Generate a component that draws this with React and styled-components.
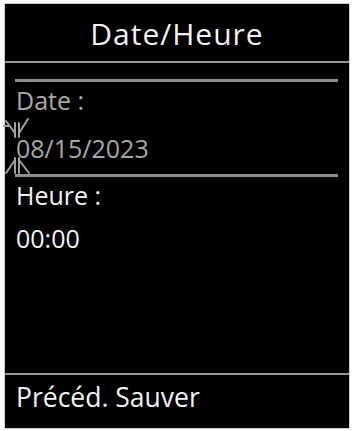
import React from "react";
import styled, { createGlobalStyle } from "styled-components";

const Global = createGlobalStyle`
  html, body { margin: 0; padding: 0; background: #ffffff; }
  body { font-family: "Open Sans", "Noto Sans", sans-serif; }
  #root { padding: 3px 0 0 4px; }
`;

const Screen = styled.div`
  width: 344px;
  height: 424px;
  background: #000;
  border: 1px solid #cfcfcf;
  display: flex;
  flex-direction: column;
  color: #f2f2f2;
`;

const Header = styled.div`
  height: 57px;
  display: flex;
  align-items: center;
  justify-content: center;
  font-size: 30px;
  letter-spacing: 1px;
  line-height: 57px;
  padding-top: 2px;
  box-sizing: border-box;
`;

const Divider = styled.div`
  height: 2px;
  background: #939393;
  flex: none;
`;

const Body = styled.div`
  flex: 1;
  padding: 16px 11px 0 10px;
  display: flex;
  flex-direction: column;
`;

const Rule = styled.div`
  height: 3px;
  background: #8f8f8f;
  margin-top: ${(p) => p.$top || 0}px;
`;

const Label = styled.div`
  font-size: 25px;
  line-height: 36px;
  padding-left: 1px;
  color: ${(p) => (p.$dim ? "#a8a8a8" : "#f4f4f4")};
`;

const Value = styled.div`
  position: relative;
  font-size: 25px;
  line-height: 32px;
  padding-left: 1px;
  margin-top: ${(p) => p.$gap}px;
  color: ${(p) => (p.$dim ? "#a8a8a8" : "#f4f4f4")};
`;

const Cursor = styled.svg`
  position: absolute;
  left: -12px;
  top: -16px;
  width: 30px;
  height: 60px;
  pointer-events: none;
`;

const Footer = styled.div`
  flex: none;
  height: 53px;
  padding-left: 11px;
  font-size: 26.5px;
  line-height: 44px;
`;

function BlinkCursor() {
  return (
    <Cursor viewBox="0 0 30 60">
      <g stroke="#a2a2a2" strokeWidth="2" fill="none" strokeLinecap="round">
        <line x1="3" y1="5" x2="12" y2="17" />
        <line x1="25" y1="3" x2="16" y2="17" />
        <line x1="12" y1="7" x2="12" y2="21" />
        <line x1="16" y1="7" x2="16" y2="21" />
        <line x1="0" y1="10" x2="6" y2="10" />
        <line x1="12" y1="44" x2="3" y2="57" />
        <line x1="16" y1="44" x2="26" y2="57" />
        <line x1="12" y1="42" x2="12" y2="57" />
        <line x1="16" y1="42" x2="16" y2="57" />
      </g>
    </Cursor>
  );
}

export default function App() {
  return (
    <>
      <Global />
      <Screen>
        <Header>Date/Heure</Header>
        <Divider />
        <Body>
          <Rule />
          <Label $dim>Date :</Label>
          <Value $dim $gap={14}>
            <BlinkCursor />
            08/15/2023
          </Value>
          <Rule $top={10} />
          <Label>Heure :</Label>
          <Value $gap={9}>00:00</Value>
        </Body>
        <Divider />
        <Footer>Précéd. Sauver</Footer>
      </Screen>
    </>
  );
}
